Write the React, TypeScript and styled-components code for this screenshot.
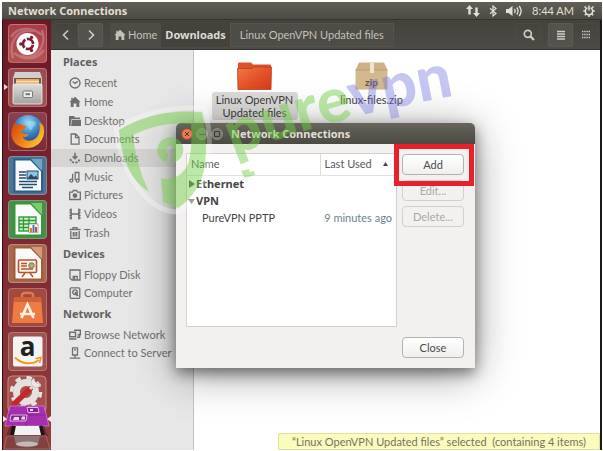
import React from 'react';
import styled, { createGlobalStyle } from 'styled-components';

const REGULAR = 'Lato, "Noto Sans", sans-serif';
const STRONG = '"Noto Sans", "Open Sans", sans-serif';

const GlobalStyle = createGlobalStyle`
  * { box-sizing: border-box; }
  body { margin: 0; background: #fff; font: 11px/14px ${REGULAR}; color: #4c4c4c; }
  button { font: inherit; color: inherit; margin: 0; padding: 0; cursor: pointer; }
  svg { display: block; flex: none; overflow: visible; }
  ul { list-style: none; margin: 0; padding: 0; }
`;

const Desktop = styled.div`
  position: relative;
  display: flex;
  flex-direction: column;
  min-height: 100vh;
  padding: 2px 1px 1px 2px;
  background: #fff;
`;

const TopBar = styled.header`
  display: flex;
  align-items: center;
  justify-content: space-between;
  height: 18px;
  padding: 0 7px 0 6px;
  background: linear-gradient(#615f56, #4b4a43);
  border-bottom: 1px solid #35342f;
  color: #e2dfd6;
`;

const BarTitle = styled.h1`
  margin: 0;
  font: bold 11px/16px ${STRONG};
`;

const Indicators = styled.div`
  display: flex;
  align-items: center;
  gap: 9px;
`;

const Workspace = styled.div`
  flex: 1;
  display: flex;
  border-right: 2px solid #1c1b1a;
`;

const Launcher = styled.nav`
  position: relative;
  flex: none;
  display: flex;
  flex-direction: column;
  align-items: center;
  gap: 5px;
  width: 49px;
  padding-top: 4px;
  border-left: 1px solid #2b0d12;
  background: linear-gradient(#681a26, #7c2531 45%, #8f3f3c);
`;

const Tile = styled.button<{ $tint: string; $running?: boolean }>`
  position: relative;
  display: flex;
  align-items: center;
  justify-content: center;
  width: 39px;
  height: 39px;
  border: 1px solid rgba(255, 255, 255, 0.22);
  border-radius: 4px;
  background: ${p => p.$tint};
  &::before {
    content: ${p => (p.$running ? '""' : 'none')};
    position: absolute;
    left: -5px;
    top: 15px;
    border: 3px solid transparent;
    border-left: 4px solid #e8dfdf;
    border-right: 0;
  }
`;

const LauncherFold = styled.div`
  position: absolute;
  left: 0;
  bottom: 0;
`;

const FileManager = styled.main`
  flex: 1;
  min-width: 0;
  display: flex;
  flex-direction: column;
`;

const Toolbar = styled.div`
  display: flex;
  align-items: center;
  height: 30px;
  padding: 0 2px;
  background: linear-gradient(#43423d, #4c4b46);
  border-bottom: 1px solid #33322e;
  color: #cfccc4;
`;

const ToolGroup = styled.div<{ $gap?: number }>`
  display: flex;
  gap: ${p => p.$gap ?? 0}px;
`;

const ToolButton = styled.button<{ $raised?: boolean }>`
  display: flex;
  align-items: center;
  justify-content: center;
  width: 25px;
  height: 24px;
  border: 1px solid ${p => (p.$raised ? '#5a5953' : '#4a4944')};
  border-radius: 2px;
  background: ${p => (p.$raised ? '#53524d' : 'transparent')};
`;

const Breadcrumbs = styled.nav`
  display: flex;
  margin-left: 7px;
  margin-right: auto;
`;

const Crumb = styled.a<{ $current?: boolean }>`
  display: flex;
  align-items: center;
  gap: 2px;
  height: 24px;
  padding: 0 4px;
  text-decoration: none;
  color: ${p => (p.$current ? '#dedbd3' : '#c4c1b9')};
  font: ${p => (p.$current ? `bold 11px/14px ${STRONG}` : `11px/14px ${REGULAR}`)};
  background: ${p => (p.$current ? '#43423d' : '#4d4c47')};
  &:last-child { padding: 0 9px; border: 1px solid #54534d; }
`;

const Panes = styled.div`
  flex: 1;
  display: flex;
`;

const Sidebar = styled.aside`
  flex: none;
  width: 143px;
  background: #e8e7e7;
  border-right: 1px solid #c6c4c2;
  color: #706f6d;
`;

const SideHeading = styled.h2`
  margin: 0;
  padding-left: 12px;
  font: bold 11px/24px ${STRONG};
  color: #62605e;
`;

const SideList = styled.ul<{ $height: number }>`
  display: grid;
  grid-auto-rows: 1fr;
  height: ${p => p.$height}px;
`;

const SideLink = styled.a<{ $selected?: boolean }>`
  display: flex;
  align-items: center;
  gap: 3px;
  height: 100%;
  padding-left: 18px;
  color: inherit;
  text-decoration: none;
  white-space: nowrap;
  background: ${p => (p.$selected ? '#d6d5d3' : 'transparent')};
`;

const FilePane = styled.section`
  flex: 1;
  display: flex;
  flex-direction: column;
  justify-content: space-between;
  align-items: flex-end;
  background: #fff;
`;

const FileGrid = styled.ul`
  align-self: stretch;
  display: grid;
  grid-template-columns: repeat(auto-fill, 117px);
  padding: 12px 0 0 2px;
`;

const FileItem = styled.li`
  display: flex;
  flex-direction: column;
  align-items: center;
  gap: 2px;
`;

const FileName = styled.span<{ $selected?: boolean }>`
  max-width: 86px;
  padding: 1px 2px;
  border-radius: 3px;
  text-align: center;
  line-height: 13px;
  color: #3c3c3c;
  background: ${p => (p.$selected ? '#dddbda' : 'transparent')};
`;

const StatusBar = styled.output`
  padding: 0 13px;
  border: 1px solid #dfe09a;
  border-radius: 2px 0 0 0;
  background: #fbfbbd;
  color: #75745f;
  line-height: 15px;
  white-space: pre;
`;

const Dialog = styled.section`
  position: absolute;
  left: 176px;
  top: 123px;
  width: 299px;
  border-radius: 5px 5px 0 0;
  background: #f2f1f0;
  box-shadow: 0 5px 14px rgba(0, 0, 0, 0.45), 0 6px 44px rgba(0, 0, 0, 0.4);
`;

const DialogTitle = styled.header`
  display: flex;
  align-items: center;
  gap: 3px;
  height: 21px;
  padding-left: 5px;
  border-radius: 5px 5px 0 0;
  background: linear-gradient(#67655c, #4a4943);
  color: #e2dfd6;
  h2 { margin: 0 0 0 5px; font: bold 11px/16px ${STRONG}; }
`;

const WindowButton = styled.button<{ $close?: boolean }>`
  display: flex;
  align-items: center;
  justify-content: center;
  width: 12px;
  height: 12px;
  border: 1px solid ${p => (p.$close ? '#8f4a30' : '#8b897f')};
  border-radius: 50%;
  background: ${p => (p.$close ? '#f0764c' : '#7b7a71')};
  color: #3c3b37;
`;

const DialogBody = styled.div`
  display: flex;
  flex-direction: column;
  gap: 10px;
  padding: 9px 11px 10px 10px;
`;

const DialogRow = styled.div`
  display: flex;
  gap: 5px;
`;

const TableFrame = styled.div`
  flex: 1;
  min-height: 174px;
  border: 1px solid #d3d1cf;
  background: #fff;
`;

const ConnectionTable = styled.table`
  width: 100%;
  border-collapse: collapse;
  th, td { padding: 0; text-align: left; font-weight: normal; }
  th { height: 21px; padding-left: 4px; border-bottom: 1px solid #e3e2e1; color: #5a5a5a; }
  th + th { width: 76px; border-left: 1px solid #dddbda; }
  td { height: 17px; padding-top: 1px; color: #454545; }
  td + td { padding-right: 4px; text-align: right; color: #6b7f92; }
`;

const SortLabel = styled.span`
  display: flex;
  align-items: center;
  justify-content: space-between;
  padding-right: 8px;
`;

const GroupLabel = styled.span`
  display: flex;
  align-items: center;
  gap: 1px;
  padding-left: 1px;
  font: bold 11px/14px ${STRONG};
`;

const ChildLabel = styled.span`
  padding-left: 15px;
`;

const Actions = styled.div`
  display: flex;
  flex-direction: column;
  gap: 5px;
  padding-top: 1px;
`;

const ActionButton = styled.button`
  width: 62px;
  height: 21px;
  border: 1px solid #b5b3b0;
  border-radius: 4px;
  background: linear-gradient(#fff, #f0efee);
  &:disabled { border-color: #d2d0ce; background: #f2f1f0; color: #aaa8a6; cursor: default; }
`;

const Callout = styled.div`
  position: relative;
  display: flex;
  &::after {
    content: '';
    position: absolute;
    inset: -10px -10px -11px -8px;
    border: 5px solid #e8202a;
    pointer-events: none;
  }
`;

const DialogFooter = styled.footer`
  display: flex;
  justify-content: flex-end;
`;

const Watermark = styled.svg`
  position: absolute;
  left: 110px;
  top: 60px;
  pointer-events: none;
`;

/* ---------- small icons ---------- */

const Glyph = ({ children, size = 12 }: { children: React.ReactNode; size?: number }) => (
  <svg width={size} height={size} viewBox="0 0 12 12" fill="none" stroke="currentColor" strokeWidth="1.3" aria-hidden="true">
    {children}
  </svg>
);

const HomeShape = () => <path d="M6 .8L11.6 6H10.3v5H7.4V7.4H4.6V11H1.7V6H.4L2.3 4.2V1.8H3.7V3z" fill="currentColor" stroke="none" />;

const icons: Record<string, React.ReactNode> = {
  Recent: <><circle cx="6" cy="6" r="5" /><path d="M3.6 4.4L6 6.4L8.8 4.4" /></>,
  Home: <HomeShape />,
  Desktop: <><path d="M0 1h5l1 1.4h5V4H2.6L1.6 9.5V11H0z" fill="currentColor" stroke="none" /><path d="M3 4.7h9V11H2z" fill="currentColor" stroke="none" /></>,
  Documents: <><path d="M2.2 1h4.6L10 4.2V11.2H2.2z" /><path d="M6.5 1v3.6H10" /></>,
  Downloads: <><path d="M6 .8V6.4M3.6 4.2L6 6.6L8.4 4.2" strokeWidth="1.6" /><path d="M1.4 6.8C1.8 9.6 3.6 10.6 6 10.6S10.2 9.6 10.6 6.8" strokeWidth="1.7" strokeDasharray="2.2 1.2" /></>,
  Music: <><path d="M3.6 9.6V2.8M9.9 9V1.2M6.2 9V1.5H10.5" /><circle cx="2.3" cy="9.6" r="1.5" /><circle cx="8.6" cy="9.6" r="1.5" /></>,
  Pictures: <><path d="M.7 3.2H3.4L4.3 1.5H7.7L8.6 3.2H11.3V10.5H.7z" /><circle cx="6" cy="6.6" r="1.8" fill="currentColor" /></>,
  Videos: <path d="M2 .5V11.5M10 .5V11.5M2 6H10M.4 2H3M.4 4.5H3M.4 7.5H3M.4 10H3M9 2h2.6M9 4.5h2.6M9 7.5h2.6M9 10h2.6" />,
  Trash: <path d="M.5 2.5H11.5M4 2.2V.7H8V2.2M1.8 4V11.3H10.2V4M4.3 5V9.5M6 5V9.5M7.7 5V9.5" />,
  'Floppy Disk': <><path d="M1 1H11V11H3L1 9.3z" /><path d="M4.2 11V7.3H8.2V11M5.6 8V10.5" /></>,
  Computer: <><rect x="1.2" y=".8" width="9.6" height="10.5" rx="1" /><circle cx="6" cy="5.2" r="2.3" /><path d="M6 5.2L8.8 9" strokeWidth="2" /></>,
  'Browse Network': <path d="M.7 3.2H6.5V7.8H.7zM0 10H7.5M5 1.2H11.3V5.8H8.5M8 8.2h2.5V6" strokeWidth="1.5" />,
  'Connect to Server': <path d="M3.5 .8H8.5V8H3.5zM6 8V11M.8 11.2H11.2M5 2.8H7" />,
};

const SideSection = ({ title, names, height, selected }: { title: string; names: string[]; height: number; selected?: string }) => (
  <>
    <SideHeading>{title}</SideHeading>
    <SideList $height={height}>
      {names.map(name => (
        <li key={name}>
          <SideLink href="#" $selected={name === selected}>
            <Glyph>{icons[name]}</Glyph>
            {name}
          </SideLink>
        </li>
      ))}
    </SideList>
  </>
);

/* ---------- launcher artwork ---------- */

const Art = ({ children }: { children: React.ReactNode }) => (
  <svg width="37" height="37" viewBox="0 0 37 37" aria-hidden="true">{children}</svg>
);

const DashArt = () => (
  <Art>
    <path d="M4 33C-1 18 8 3 25 6M33 5C38 20 28 36 12 31M2 12C8 2 22 1 33 10M35 25C28 35 16 36 5 28" stroke="#fff" strokeOpacity=".22" strokeWidth="2.5" fill="none" />
    <circle cx="18.5" cy="19" r="11" fill="#fff" />
    <circle cx="19" cy="19" r="5" fill="none" stroke="#7a2030" strokeWidth="2.6" strokeDasharray="9 1.47" strokeDashoffset="-.8" />
    <circle cx="11.8" cy="19" r="1.7" fill="#7a2030" />
    <circle cx="22.5" cy="12.5" r="1.7" fill="#7a2030" />
    <circle cx="22.5" cy="25.5" r="1.7" fill="#7a2030" />
  </Art>
);

const FilesArt = () => (
  <Art>
    <defs>
      <linearGradient id="cabinet" x1="0" y1="0" x2="0" y2="1"><stop offset="0" stopColor="#dcdcdc" /><stop offset="1" stopColor="#a3a3a3" /></linearGradient>
    </defs>
    <path d="M6 3H31L33 9V17H4V9z" fill="#d0cfce" />
    <rect x="5" y="9" width="27" height="8" fill="#6a5a50" />
    <path d="M7 10H30V17H7z" fill="#f0a35a" /><path d="M7 12.5H30" stroke="#fce2b8" strokeWidth="1.5" />
    <rect x="4" y="15" width="29" height="20" rx="1.5" fill="url(#cabinet)" stroke="#f2f2f2" strokeWidth=".8" />
    <rect x="14" y="22" width="9.5" height="6.5" rx="1" fill="#eee" stroke="#777" />
    <rect x="16.5" y="24.2" width="4.5" height="2" fill="#777" />
  </Art>
);

const FirefoxArt = () => (
  <Art>
    <defs>
      <radialGradient id="globe" cx=".5" cy=".25" r=".7"><stop offset="0" stopColor="#9fdcf2" /><stop offset=".5" stopColor="#3a86c8" /><stop offset="1" stopColor="#1c3f7c" /></radialGradient>
      <linearGradient id="fox" x1="0" y1=".2" x2="1" y2=".8"><stop offset="0" stopColor="#d64a12" /><stop offset=".55" stopColor="#f28a18" /><stop offset="1" stopColor="#fcd23c" /></linearGradient>
    </defs>
    <circle cx="19" cy="17.5" r="15.5" fill="url(#globe)" />
    <path d="M22 8C27 8 28 11 25 13C23 14.5 24 17 21 17C18 14 19 9 22 8z" fill="#b8e2f2" opacity=".5" />
    <path d="M34 12C38 24 30 35 18.5 35C8 35 1 27 2.5 18C3 14 4.500 11 6 9L7.5 12C10 10 13 11 14.5 12.5L17 13L16 16L12.5 18C12.5 20 14 21 16 21L20 21.5C18 24 15 24.5 13.5 23.5C15 28 22 29.5 27 25C31 21 31.5 15 30 9C32 10 33.5 12 34 12z" fill="url(#fox)" />
  </Art>
);

const Page = ({ edge, corner, children }: { edge: string; corner: string; children: React.ReactNode }) => (
  <Art>
    <path d="M5.5 2.5H22L33 14V34.5H5.5z" fill="#fafafa" stroke={edge} strokeWidth="2" />
    <path d="M22 2H33V14z" fill={corner} />
    {children}
  </Art>
);

const WriterArt = () => (
  <Page edge="#23608c" corner="#6fa6c8">
    <path d="M10 15H17M10 18H17M10 21H17M10 24.5H28M10 27.5H28M13 30.5H24" stroke="#1d4f74" strokeWidth="1.7" />
    <rect x="18" y="14" width="11" height="8" fill="#8fc3e0" stroke="#1d4f74" /><path d="M18 22L22 17L25 20L27 18.5L29 22z" fill="#2c4a5c" />
  </Page>
);

const CalcArt = () => (
  <Page edge="#2f9a36" corner="#7acb6c">
    <rect x="10" y="16" width="17" height="14" fill="#d5f0cd" stroke="#2f9a36" strokeWidth="1.4" />
    <path d="M10 19.5H27M10 23H27M10 26.5H27M14.5 16V30M20 16V30" stroke="#2f9a36" strokeWidth="1.3" />
    <rect x="20" y="23" width="9" height="8.5" fill="#fff" stroke="#777" strokeWidth=".6" />
    <path d="M22 31V27" stroke="#e87b24" strokeWidth="2" /><path d="M24.5 31V24" stroke="#3d78bf" strokeWidth="2" /><path d="M27 31V26" stroke="#d2472c" strokeWidth="2" />
  </Page>
);

const ImpressArt = () => (
  <Page edge="#a85a34" corner="#d59a78">
    <path d="M13 32L16 28M24 32L21 28" stroke="#a85a34" strokeWidth="1.5" />
    <rect x="9.5" y="15" width="18" height="12.5" rx="1" fill="#fdf0e6" stroke="#b5552c" strokeWidth="1.6" />
    <path d="M12 18.5H18M12 21H18M12 24H24" stroke="#b5552c" strokeWidth="1.5" /><circle cx="22.5" cy="20.5" r="2.8" fill="#8fbf7c" stroke="#a33" strokeWidth=".7" />
  </Page>
);

const SoftwareArt = () => (
  <Art>
    <path d="M13 9V5.5C13 3 24 3 24 5.5V9" fill="none" stroke="#e2784c" strokeWidth="2.5" />
    <path d="M5 8H32L34 34H3z" fill="#ee7b43" /><path d="M5 8H32L32.4 13H4.6z" fill="#cf6038" />
    <path d="M12.5 29L18.5 15.5L24.5 29M11 25H26" stroke="#fff3e8" strokeWidth="2.6" fill="none" />
  </Art>
);

const AmazonArt = () => (
  <Art>
    <rect x="4" y="3.5" width="29.5" height="30" rx="2" fill="#f4f4f4" />
    <text x="18.5" y="23" textAnchor="middle" fontFamily="Open Sans, sans-serif" fontWeight="bold" fontSize="26" fill="#222">a</text>
    <path d="M6 24.5C13 31.5 23 32 30 27" fill="none" stroke="#f29a1f" strokeWidth="2" /><path d="M26.5 25.5L32 24.5L30.5 30" fill="none" stroke="#f29a1f" strokeWidth="1.6" />
  </Art>
);

const FoldArt = () => (
  <svg width="48" height="76" viewBox="0 0 48 76" aria-hidden="true">
    <rect x="5" y="2" width="38" height="36" rx="4" fill="#a5504c" stroke="#c98884" />
    <circle cx="23" cy="18" r="9.500" fill="none" stroke="#e4e2e0" strokeWidth="7" />
    <circle cx="23" cy="18" r="14.5" fill="none" stroke="#e4e2e0" strokeWidth="3.5" strokeDasharray="5.5 5.9" />
    <path d="M11 30L27 15" stroke="#c4282c" strokeWidth="5.5" strokeLinecap="round" />
    <path d="M27 15L32 10" stroke="#d8d8d6" strokeWidth="3" /><path d="M31 4A5 5 0 1 0 38 10L34 9.5L32 7.5z" fill="#e9e8e6" stroke="#aaa" strokeWidth=".5" />
    <path d="M7 32H41L46 52H2z" fill="#a530ae" stroke="#d27ad6" strokeWidth=".8" />
    <path d="M24 32L23 52M5 41H43" stroke="#7f2088" strokeWidth=".7" />
    <path d="M24 33.5H35L36 38.5H25zM8 41H24L23 47H7z" fill="#7d2888" stroke="#e8b4ea" />
    <path d="M11 43H16V46H10zM19 42.5h3v3h-4zM27 35h3v2h-3z" fill="#f0d4f2" />
    <path d="M7 52H41L45 62H3z" fill="#6e2b33" />
    <path d="M11 52L9 61M37 52L40 61" stroke="#1c1314" strokeWidth="4" />
    <path d="M13 52H36L38 61H11z" fill="#f2f2f2" />
    <path d="M4 62H43L47 75H1z" fill="#84403f" stroke="#a8706c" strokeWidth=".8" />
    <path d="M11 62H37L35 71C30 74 18 74 13 71z" fill="#8d7673" /><ellipse cx="24" cy="70" rx="11" ry="2.5" fill="#c3bab8" />
    <path d="M0 42L4 45L0 48zM48 42L44 45L48 48z" fill="#f0e6e8" />
  </svg>
);

const launcherItems = [
  { name: 'Dash', tint: 'linear-gradient(#a83c48, #b5524f)', art: <DashArt /> },
  { name: 'Files', tint: 'linear-gradient(#9c4a52, #a8504f)', art: <FilesArt />, running: true },
  { name: 'Firefox', tint: 'linear-gradient(#8c4050, #7d2c34)', art: <FirefoxArt /> },
  { name: 'Writer', tint: '#4f7390', art: <WriterArt /> },
  { name: 'Calc', tint: '#4f8a50', art: <CalcArt /> },
  { name: 'Impress', tint: '#a46a52', art: <ImpressArt /> },
  { name: 'Software', tint: '#a04a42', art: <SoftwareArt /> },
  { name: 'Amazon', tint: '#a05250', art: <AmazonArt /> },
];

/* ---------- file artwork ---------- */

const FolderArt = () => (
  <svg width="35" height="28" viewBox="0 0 35 28" aria-hidden="true">
    <defs><linearGradient id="folder" x1="0" y1="0" x2="1" y2="1"><stop offset="0" stopColor="#f07a48" /><stop offset=".5" stopColor="#e3542a" /><stop offset="1" stopColor="#d23c18" /></linearGradient></defs>
    <path d="M1 1.5Q1 .5 2 .5H14L16 2.5H33Q34 2.5 34 3.5V12H1z" fill="#d8542e" />
    <path d="M.5 6.5H15L17 5H34.5L34 27.5H1z" fill="url(#folder)" stroke="#bf3d1a" strokeWidth=".8" />
  </svg>
);

const ZipArt = () => (
  <svg width="33" height="28" viewBox="0 0 33 28" aria-hidden="true">
    <path d="M4 .5H29L32.5 8H.5z" fill="#cdb288" />
    <path d="M.5 8H32.5V27.5H.5z" fill="#d3b98f" /><path d="M.5 8H32.5" stroke="#bb9d70" />
    <path d="M15 .5H19V11H15z" fill="#eee3cf" />
    <text x="16.5" y="24" textAnchor="middle" fontFamily="Lato, sans-serif" fontWeight="bold" fontSize="10" fill="#6b5636">zip</text>
  </svg>
);

export default function App() {
  return (
    <>
      <GlobalStyle />
      <Desktop>
        <TopBar>
          <BarTitle>Network Connections</BarTitle>
          <Indicators>
            <svg width="14" height="12" viewBox="0 0 14 12" fill="currentColor"><path d="M3.5 0L7 4H4.7V9.5H2.3V4H0zM10.5 12L7 8H9.3V2.5H11.7V8H14z" /></svg>
            <svg width="8" height="12" viewBox="0 0 8 12" fill="none" stroke="currentColor" strokeWidth="1.2"><path d="M1 3.2L7 8.5L4 11V1L7 3.5L1 8.8" /></svg>
            <svg width="17" height="12" viewBox="0 0 17 12" fill="none" stroke="currentColor" strokeWidth="1.3"><path d="M0 4H2.5L6.5 1V11L2.5 8H0z" fill="currentColor" stroke="none" /><path d="M8.5 4Q10 6 8.5 8M10.8 2.5Q13.3 6 10.8 9.5M13.2 1Q17 6 13.2 11" /></svg>
            <span>8:44 AM</span>
            <svg width="12" height="12" viewBox="0 0 12 12" fill="none" stroke="currentColor" strokeWidth="1.6"><path d="M4.4 2.8A3.7 3.7 0 1 0 7.6 2.8M6 .5V5.5M2.8 2.8L1.5 1.5M9.2 2.8L10.5 1.5M2.3 6H.3M9.7 6h2M3.3 8.8L1.8 10.3M8.7 8.8L10.2 10.3M6 10V12" /></svg>
          </Indicators>
        </TopBar>

        <Workspace>
          <Launcher aria-label="Launcher">
            {launcherItems.map(item => (
              <Tile key={item.name} aria-label={item.name} $tint={item.tint} $running={item.running}>{item.art}</Tile>
            ))}
            <LauncherFold><FoldArt /></LauncherFold>
          </Launcher>

          <FileManager>
            <Toolbar>
              <ToolGroup>
                <ToolButton aria-label="Back"><Glyph><path d="M8 1.5L3.5 6L8 10.5" strokeWidth="1.6" /></Glyph></ToolButton>
                <ToolButton aria-label="Forward" $raised><Glyph><path d="M4 1.5L8.5 6L4 10.5" strokeWidth="1.6" /></Glyph></ToolButton>
              </ToolGroup>
              <Breadcrumbs aria-label="Path">
                <Crumb href="#"><Glyph><HomeShape /></Glyph>Home</Crumb>
                <Crumb href="#" $current>Downloads</Crumb>
                <Crumb href="#">Linux OpenVPN Updated files</Crumb>
              </Breadcrumbs>
              <ToolGroup $gap={7}>
                <ToolButton aria-label="Search"><Glyph><circle cx="4.8" cy="4.8" r="3.5" strokeWidth="1.7" /><path d="M7.4 7.4L11 11" strokeWidth="2.2" /></Glyph></ToolButton>
                <ToolGroup>
                  <ToolButton aria-label="List view" $raised><Glyph><path d="M2 2.5H10M2 5H10M2 7.5H10M2 10H10" strokeWidth="1.4" /></Glyph></ToolButton>
                  <ToolButton aria-label="Grid view"><Glyph><path d="M2 2.5H10M2 5.500H10M2 8.5H10" strokeWidth="1.4" strokeDasharray="1.4 .8" /></Glyph></ToolButton>
                </ToolGroup>
              </ToolGroup>
            </Toolbar>

            <Panes>
              <Sidebar>
                <SideSection title="Places" height={168} selected="Downloads" names={['Recent', 'Home', 'Desktop', 'Documents', 'Downloads', 'Music', 'Pictures', 'Videos', 'Trash']} />
                <SideSection title="Devices" height={36} names={['Floppy Disk', 'Computer']} />
                <SideSection title="Network" height={36} names={['Browse Network', 'Connect to Server']} />
              </Sidebar>
              <FilePane>
                <FileGrid>
                  <FileItem><FolderArt /><FileName $selected>Linux OpenVPN Updated files</FileName></FileItem>
                  <FileItem><ZipArt /><FileName>linux-files.zip</FileName></FileItem>
                </FileGrid>
                <StatusBar>{'“Linux OpenVPN Updated files” selected  (containing 4 items)'}</StatusBar>
              </FilePane>
            </Panes>
          </FileManager>
        </Workspace>

        <Dialog role="dialog" aria-labelledby="dialog-title">
          <DialogTitle>
            <WindowButton $close aria-label="Close window"><svg width="6" height="6" viewBox="0 0 6 6" stroke="currentColor"><path d="M1 1L5 5M5 1L1 5" /></svg></WindowButton>
            <WindowButton aria-label="Minimize"><svg width="6" height="6" viewBox="0 0 6 6" stroke="currentColor"><path d="M0 3.5H6" /></svg></WindowButton>
            <WindowButton aria-label="Maximize"><svg width="6" height="6" viewBox="0 0 6 6" stroke="currentColor" fill="none"><path d="M.5 .5H5.5V5.5H.5z" /></svg></WindowButton>
            <h2 id="dialog-title">Network Connections</h2>
          </DialogTitle>
          <DialogBody>
            <DialogRow>
              <TableFrame>
                <ConnectionTable>
                  <thead>
                    <tr>
                      <th>Name</th>
                      <th><SortLabel>Last Used<svg width="5" height="4" viewBox="0 0 5 4" fill="#444"><path d="M2.5 0L5 4H0z" /></svg></SortLabel></th>
                    </tr>
                  </thead>
                  <tbody>
                    <tr><td><GroupLabel><svg width="7" height="8" viewBox="0 0 7 8" fill="#555"><path d="M1 0L7 4L1 8z" /></svg>Ethernet</GroupLabel></td><td /></tr>
                    <tr><td><GroupLabel><svg width="7" height="8" viewBox="0 0 7 8" fill="#777"><path d="M0 2H7L3.5 7z" /></svg>VPN</GroupLabel></td><td /></tr>
                    <tr><td><ChildLabel>PureVPN PPTP</ChildLabel></td><td>9 minutes ago</td></tr>
                  </tbody>
                </ConnectionTable>
              </TableFrame>
              <Actions>
                <Callout><ActionButton>Add</ActionButton></Callout>
                <ActionButton disabled>Edit...</ActionButton>
                <ActionButton disabled>Delete...</ActionButton>
              </Actions>
            </DialogRow>
            <DialogFooter><ActionButton>Close</ActionButton></DialogFooter>
          </DialogBody>
        </Dialog>

        <Watermark width="360" height="155" viewBox="110 60 360 155">
          <path d="M116 128Q155 105 205 108Q214 150 205 178Q197 200 178 212Q150 212 128 172Q119 150 116 128z" fill="none" stroke="#fff" strokeOpacity=".3" strokeWidth="5" />
          <g fill="#6cd03f" fillOpacity=".46">
            <path d="M119 130Q155 108 202 112Q208 140 205 165Q201 192 178 208L163 202L161 178Q176 182 186 168Q193 155 191 124Q160 121 133 135Q136 165 149 192Q122 175 119 130z" />
            <path fillRule="evenodd" d="M170 137A13 13 0 1 1 162 160A13 13 0 0 1 170 137zM170 146A4.500 4.500 0 0 0 168 154L167 164H175L172 154A4.500 4.500 0 0 0 170 146z" />
            <path d="M241 171L249 169L250 172L254 171L255 175L245 178z" />
          </g>
          <path id="swoosh" d="M234 156Q325 118 475 92" fill="none" />
          <text fontFamily="Lato, sans-serif" fontWeight="900" fontSize="62">
            <textPath href="#swoosh">
              <tspan fill="#6cd03f" fillOpacity=".46">pure</tspan>
              <tspan fill="#7070e0" fillOpacity=".4">vpn</tspan>
            </textPath>
          </text>
        </Watermark>
      </Desktop>
    </>
  );
}
